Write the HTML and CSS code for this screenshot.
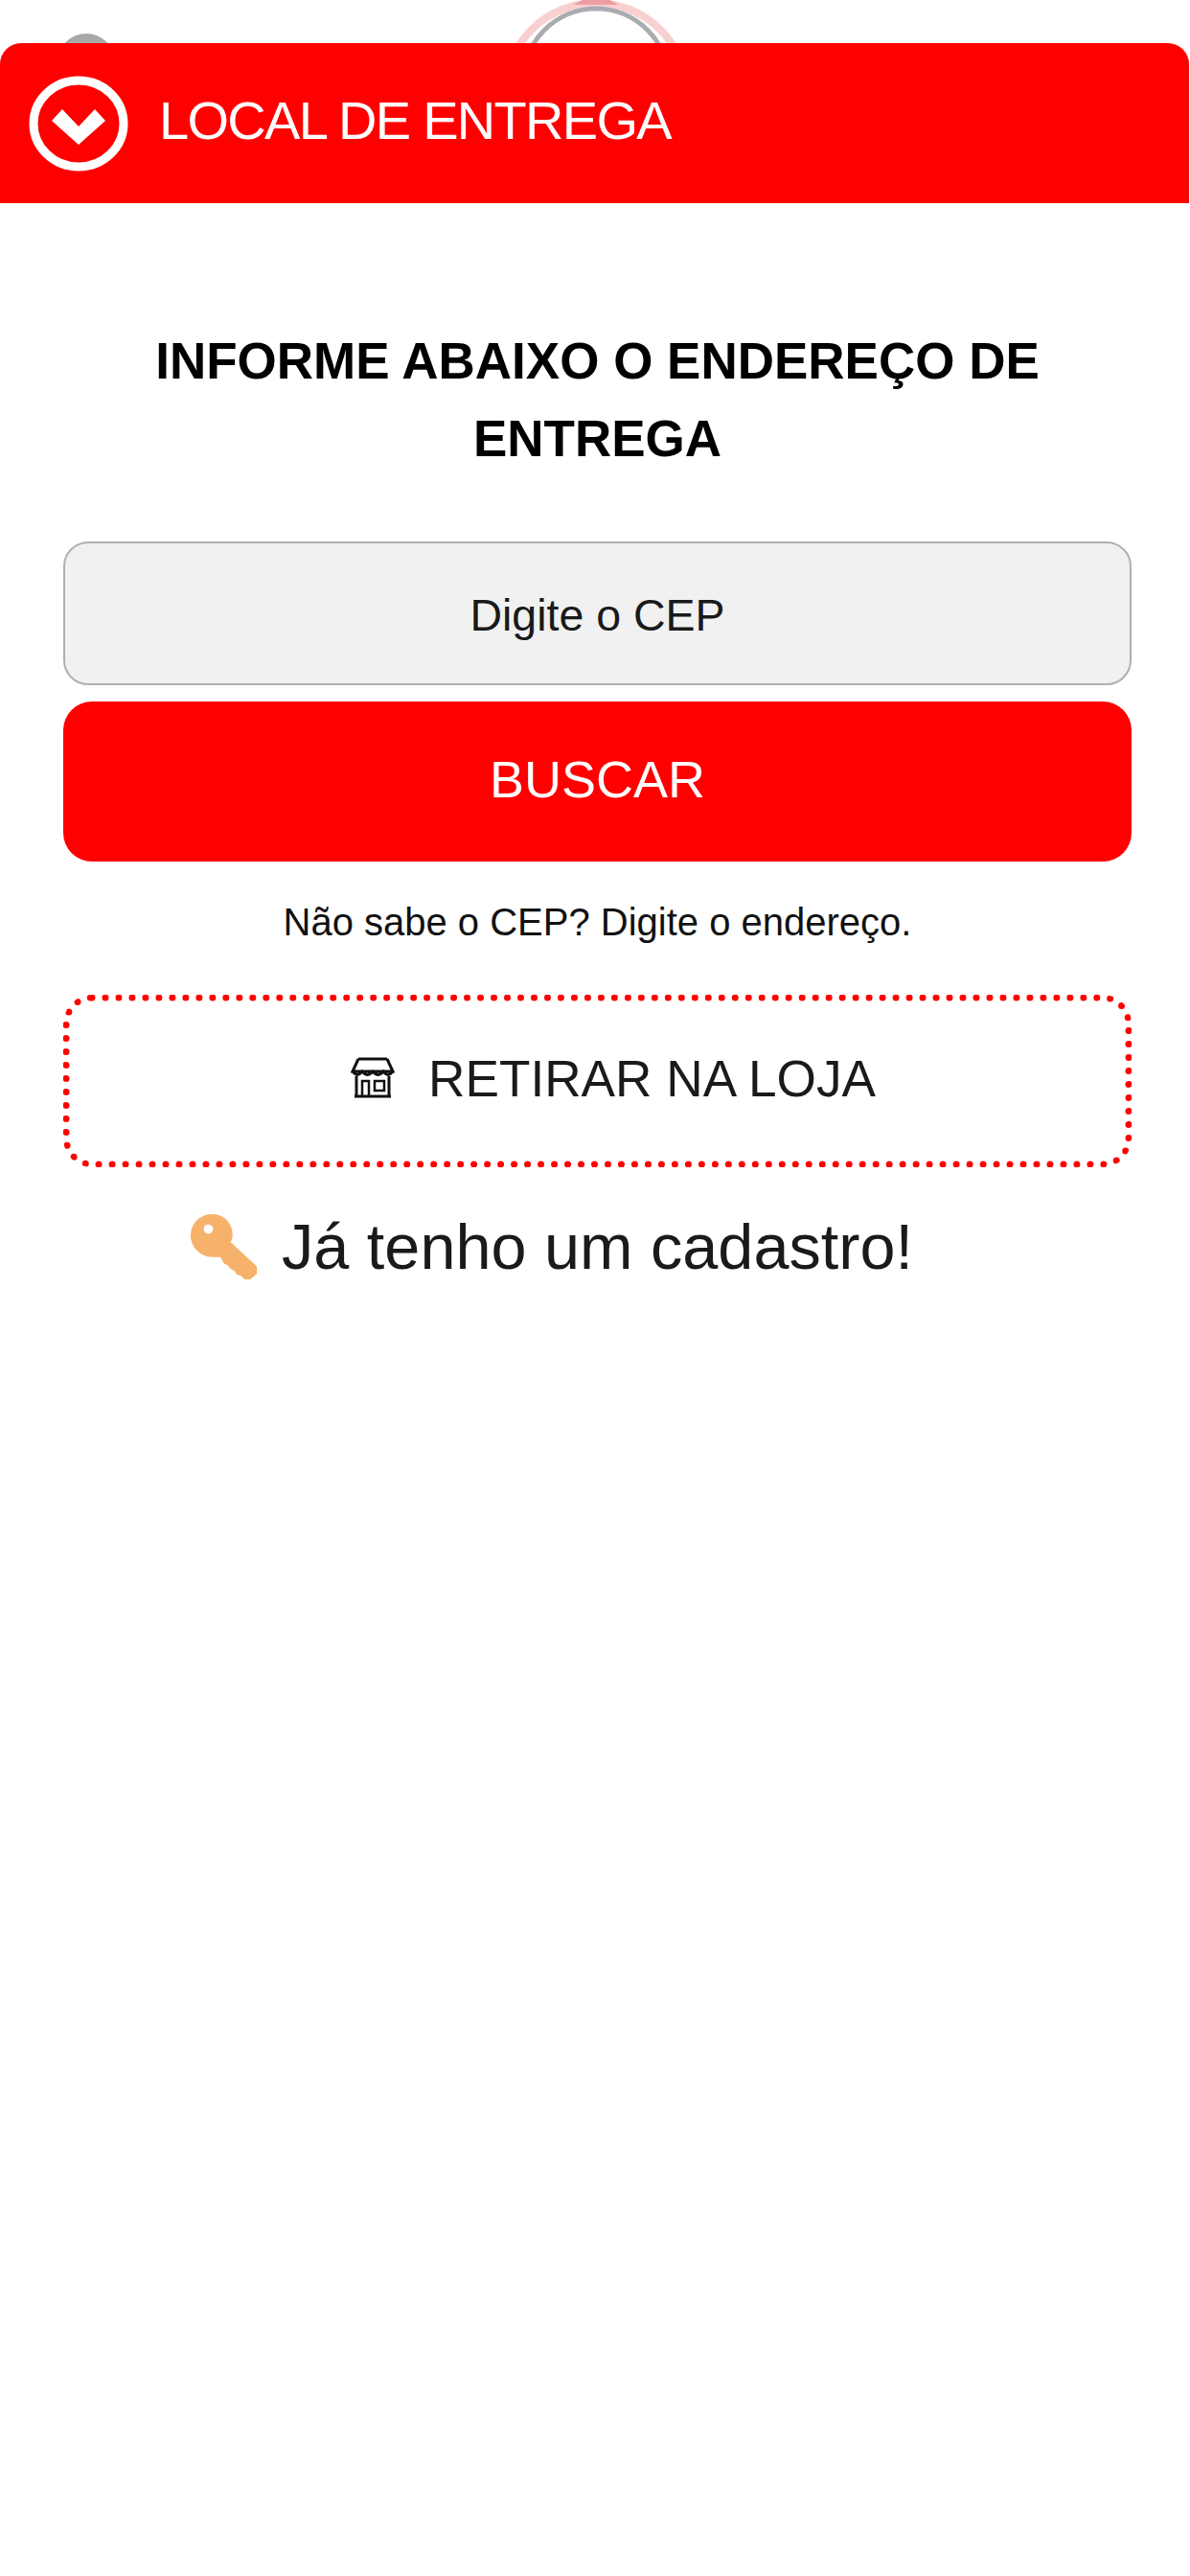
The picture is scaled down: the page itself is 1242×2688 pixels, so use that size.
FILE: index.html
```html
<!DOCTYPE html>
<html lang="pt-BR">
<head>
    <meta charset="utf-8">
    <title>Local de entrega</title>
    <link rel="stylesheet" href="styles.css">
</head>
<body>
<div class="behind">
    <i class="dot"></i>
    <svg class="ring" viewBox="0 0 220 45">
        <circle cx="110" cy="98" r="95" fill="none" stroke="#f9d0d1" stroke-width="8"/>
        <path d="M86 5 L96 0 H124 L134 5 Z" fill="#ee9ea2"/>
        <circle cx="110" cy="85" r="76" fill="none" stroke="#a9adb2" stroke-width="5"/>
    </svg>
</div>
<div class="header">
    <svg class="header-icon" viewBox="0 0 104 100">
        <ellipse cx="52" cy="50" rx="47" ry="45" fill="none" stroke="#fff" stroke-width="9"/>
        <path d="M24 47 L35 35 L52 53 L69 35 L80 47 L52 72 Z" fill="#fff"/>
    </svg>
    <span>LOCAL DE ENTREGA</span>
</div>
<div class="content">
    <h1>INFORME ABAIXO O ENDEREÇO DE ENTREGA</h1>
    <input class="cep" type="text" placeholder="Digite o CEP">
    <button class="search" type="button">BUSCAR</button>
    <p class="hint">Não sabe o CEP? Digite o endereço.</p>
    <a class="pickup" href="#">
        <svg class="store" viewBox="0 0 48 44">
            <path d="M9 2 H39 M9 2 L3 15 H45 L39 2 M3 15 Q8 22 13 15 Q18 22 24 15 Q30 22 35 15 Q40 22 45 15" fill="none" stroke="#111" stroke-width="3"/>
            <path d="M7 20 V41 M41 20 V41 M5 41 H43" fill="none" stroke="#111" stroke-width="3"/>
            <path d="M13 41 V25 H20 V41 M26 25 H36 V35 H26 Z" fill="none" stroke="#111" stroke-width="2.5"/>
        </svg>
        <span>RETIRAR NA LOJA</span>
    </a>
    <a class="login" href="#">
        <svg class="key" viewBox="0 0 74 72">
            <path fill-rule="evenodd" fill="#f6b26b" d="M24 1 C37 1 46 11 46 23 C46 26 45 29 44 31 L72 57 L72 65 L65 71 L59 71 L55 67 L51 66 L48 62 L44 60 L41 56 L37 54 L33 47 C30 47 27 47 24 47 C11 47 1 36 1 24 C1 11 11 1 24 1 Z M20 12 A5 5 0 1 0 20 22 A5 5 0 1 0 20 12 Z"/>
        </svg>
        <span>Já tenho um cadastro!</span>
    </a>
</div>
</body>
</html>
```

FILE: styles.css
```css
html, body {
    margin: 0;
    padding: 0;
}

body {
    position: relative;
    min-height: 2688px;
    padding-top: 45px;
    box-sizing: border-box;
    background: #fff;
    color: #1a1a1a;
    font-family: "Liberation Sans", Arial, sans-serif;
}

.behind {
    position: absolute;
    top: 0;
    left: 0;
    width: 100%;
    height: 45px;
    overflow: hidden;
}

.dot {
    position: absolute;
    top: 35px;
    left: 60px;
    width: 60px;
    height: 60px;
    border-radius: 50%;
    background: #a8a8a8;
}

.ring {
    position: absolute;
    top: 0;
    left: 512px;
    width: 220px;
    height: 45px;
}

.header {
    position: relative;
    display: flex;
    align-items: center;
    height: 167px;
    width: 1241px;
    padding: 0 0 6px 30px;
    box-sizing: border-box;
    background: #f00;
    border-radius: 22px 22px 0 0;
    color: #fff;
    font-size: 56px;
    letter-spacing: -1.7px;
}

.header-icon {
    width: 104px;
    height: 100px;
    margin: 6px 32px 0 0;
}

.content {
    padding: 0 61px 0 66px;
}

h1 {
    margin: 0;
    padding-top: 124px;
    font-size: 53px;
    line-height: 81px;
    text-align: center;
    color: #000;
}

.cep {
    display: block;
    width: 100%;
    height: 150px;
    margin-top: 67px;
    padding: 4px 0 0;
    box-sizing: border-box;
    background: #f1f1f1;
    border: 2px solid #b0b0b0;
    border-radius: 26px;
    font-family: inherit;
    font-size: 46.5px;
    text-align: center;
}

.cep::placeholder {
    color: #1a1a1a;
    opacity: 1;
}

.search {
    display: block;
    width: 100%;
    height: 167px;
    margin-top: 17px;
    padding: 0 0 6px;
    background: #f00;
    border: 0;
    border-radius: 30px;
    color: #fff;
    font-family: inherit;
    font-size: 54px;
}

.hint {
    margin: 40px 0 0;
    font-size: 40px;
    line-height: 46px;
    text-align: center;
    color: #111;
}

.pickup {
    display: flex;
    align-items: center;
    justify-content: center;
    height: 180px;
    margin-top: 53px;
    padding: 0 0 6px 32px;
    box-sizing: border-box;
    border: 7px dotted #f00;
    border-radius: 30px;
    color: #1a1a1a;
    font-size: 53.2px;
    text-decoration: none;
}

.store {
    width: 48px;
    height: 44px;
    margin-right: 34px;
}

.login {
    display: flex;
    align-items: center;
    justify-content: center;
    margin-top: 43px;
    padding-right: 96px;
    color: #1a1a1a;
    font-size: 66.6px;
    line-height: 80px;
    text-decoration: none;
}

.key {
    width: 72px;
    height: 70px;
    margin-right: 24px;
}
```
